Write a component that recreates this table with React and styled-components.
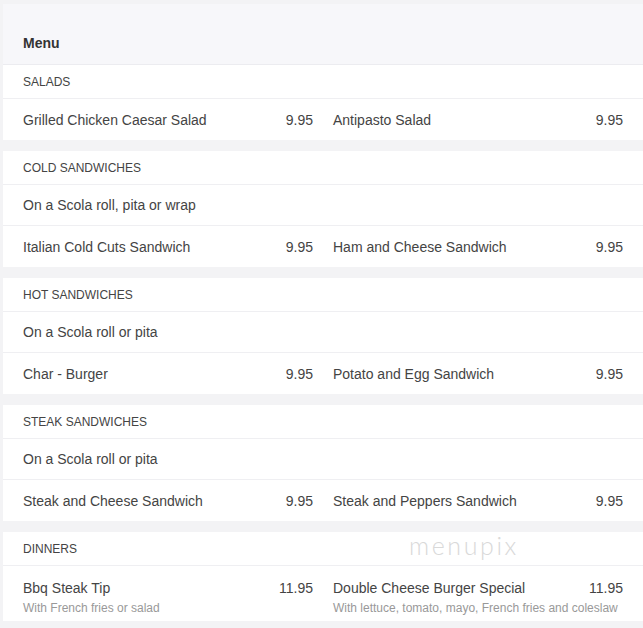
import React from 'react';
import styled, { createGlobalStyle } from 'styled-components';

const GlobalStyle = createGlobalStyle`
  body {
    margin: 0;
    background: #f3f3f5;
    font-family: "Liberation Sans", Arial, sans-serif;
  }
`;

const Page = styled.div`
  position: relative;
  padding: 4px 0 0 3px;
`;

const Header = styled.div`
  height: 61px;
  display: flex;
  align-items: center;
  padding: 18px 20px 0;
  background: #f7f7fa;
  border-bottom: 1px solid #ececf0;
  font-size: 14px;
  font-weight: bold;
  color: #333;
  box-sizing: border-box;
`;

const Section = styled.div`
  background: #fff;
  margin-bottom: 11px;
`;

const SectionTitle = styled.div`
  height: 34px;
  display: flex;
  align-items: center;
  padding: 0 20px;
  font-size: 12px;
  color: #444;
  border-bottom: 1px solid #efeff2;
  box-sizing: border-box;
`;

const Note = styled.div`
  height: 41px;
  display: flex;
  align-items: center;
  padding: 0 20px;
  font-size: 14px;
  color: #444;
  border-bottom: 1px solid #efeff2;
  box-sizing: border-box;
`;

const ItemRow = styled.div`
  display: grid;
  grid-template-columns: 290px 290px;
  column-gap: 20px;
  padding: ${p => (p.tall ? '14px 20px 6px' : '0 20px')};
  min-height: 41px;
  align-items: ${p => (p.tall ? 'start' : 'center')};
  box-sizing: border-box;
`;

const Item = styled.div`
  display: flex;
  flex-direction: column;
  gap: 5px;
`;

const ItemLine = styled.div`
  display: flex;
  justify-content: space-between;
  font-size: 14px;
  color: #444;
`;

const Desc = styled.div`
  font-size: 12px;
  color: #999;
`;

const Watermark = styled.div`
  position: absolute;
  left: 409px;
  top: 530px;
  font-family: Lato, "Open Sans", sans-serif;
  font-weight: 300;
  font-size: 25px;
  letter-spacing: 2.6px;
  color: #d9d9d9;
  pointer-events: none;
`;

const menu = [
  {
    title: 'SALADS',
    rows: [[
      { name: 'Grilled Chicken Caesar Salad', price: '9.95' },
      { name: 'Antipasto Salad', price: '9.95' },
    ]],
  },
  {
    title: 'COLD SANDWICHES',
    note: 'On a Scola roll, pita or wrap',
    rows: [[
      { name: 'Italian Cold Cuts Sandwich', price: '9.95' },
      { name: 'Ham and Cheese Sandwich', price: '9.95' },
    ]],
  },
  {
    title: 'HOT SANDWICHES',
    note: 'On a Scola roll or pita',
    rows: [[
      { name: 'Char - Burger', price: '9.95' },
      { name: 'Potato and Egg Sandwich', price: '9.95' },
    ]],
  },
  {
    title: 'STEAK SANDWICHES',
    note: 'On a Scola roll or pita',
    rows: [[
      { name: 'Steak and Cheese Sandwich', price: '9.95' },
      { name: 'Steak and Peppers Sandwich', price: '9.95' },
    ]],
  },
  {
    title: 'DINNERS',
    rows: [[
      { name: 'Bbq Steak Tip', price: '11.95', desc: 'With French fries or salad' },
      { name: 'Double Cheese Burger Special', price: '11.95', desc: 'With lettuce, tomato, mayo, French fries and coleslaw' },
    ]],
  },
];

const App = () => (
  <Page>
    <GlobalStyle />
    <Header>Menu</Header>
    {menu.map(section => (
      <Section key={section.title}>
        <SectionTitle>{section.title}</SectionTitle>
        {section.note && <Note>{section.note}</Note>}
        {section.rows.map((row, i) => {
          const tall = row.some(it => it.desc);
          return (
            <ItemRow key={i} tall={tall}>
              {row.map(it => (
                <Item key={it.name}>
                  <ItemLine>
                    <span>{it.name}</span>
                    <span>{it.price}</span>
                  </ItemLine>
                  {it.desc && <Desc>{it.desc}</Desc>}
                </Item>
              ))}
            </ItemRow>
          );
        })}
      </Section>
    ))}
    <Watermark>menupix</Watermark>
  </Page>
);

export default App;
